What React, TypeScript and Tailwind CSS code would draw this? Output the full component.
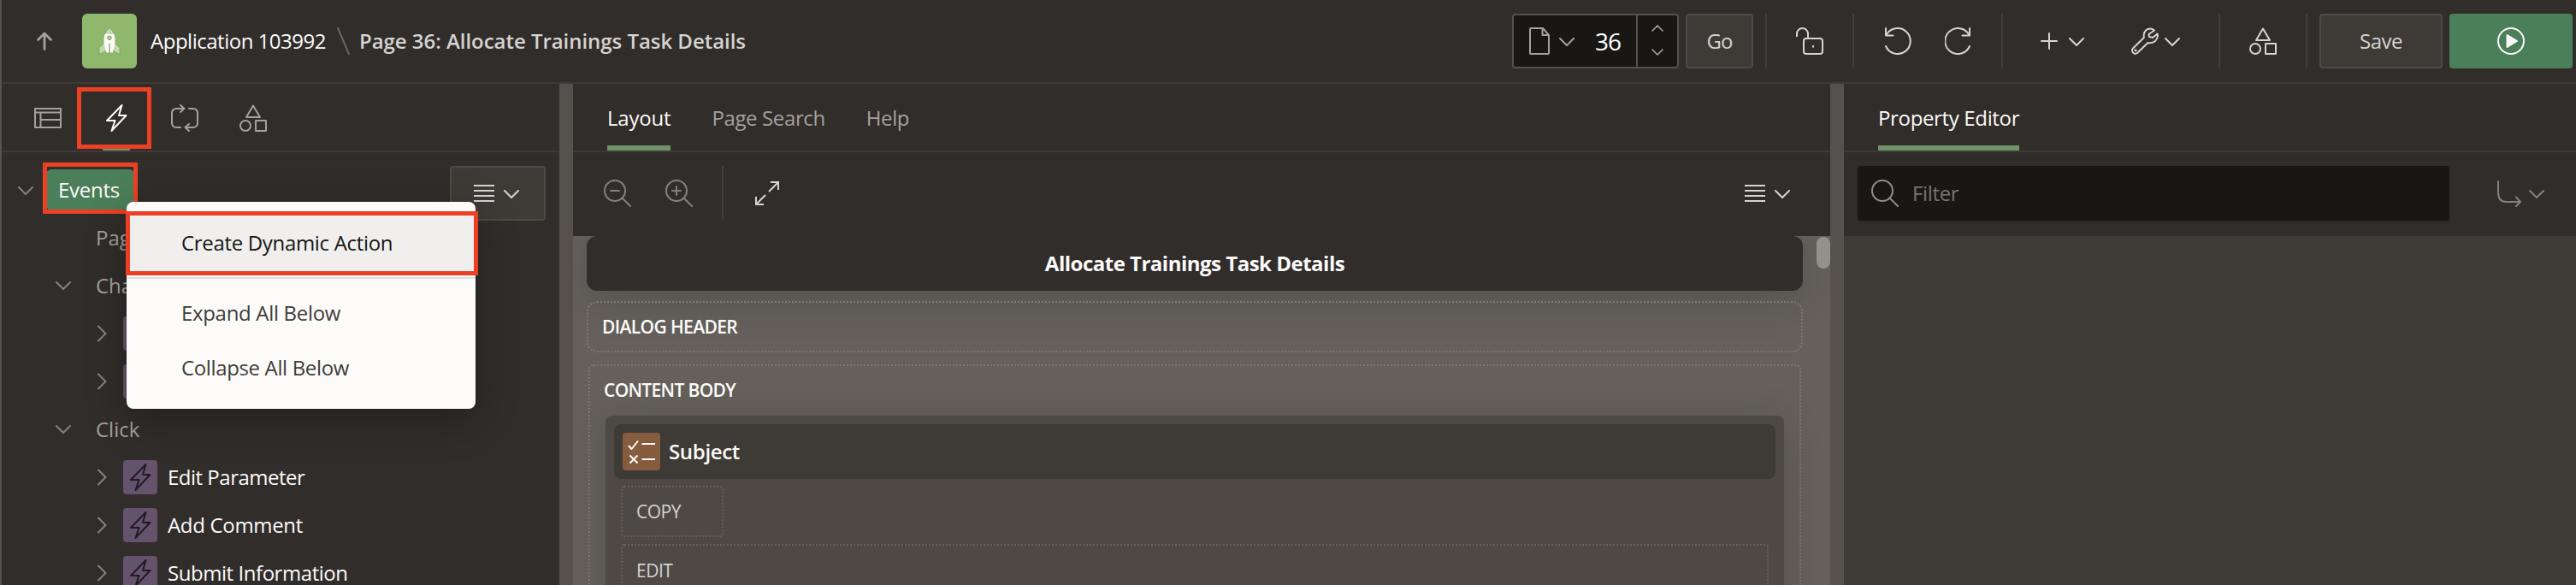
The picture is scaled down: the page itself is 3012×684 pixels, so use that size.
import type { ReactNode } from "react";

type IconProps = { className?: string };

function Icon({ className = "", children, size = "size-8", box = "0 0 32 32" }: { className?: string; children: ReactNode; size?: string; box?: string }) {
  return (
    <svg viewBox={box} className={`shrink-0 ${size} ${className}`} fill="none" stroke="currentColor" strokeWidth="2" strokeLinecap="round" strokeLinejoin="round">
      {children}
    </svg>
  );
}

const ChevronDown = ({ className }: IconProps) => (
  <Icon className={className} size="w-[18px] h-[10px]" box="0 0 18 10">
    <path d="M1 1l8 8 8-8" />
  </Icon>
);

const ChevronRight = ({ className }: IconProps) => (
  <Icon className={className} size="w-[11px] h-[20px]" box="0 0 11 20">
    <path d="M1 1.5l8.5 8.5L1 18.5" />
  </Icon>
);

const Menu = ({ className }: IconProps) => (
  <Icon className={className} size="w-6 h-5" box="0 0 24 20">
    <path d="M0 1h24M0 7h24M0 13h24M0 19h24" strokeLinecap="butt" />
  </Icon>
);

const Shapes = ({ className }: IconProps) => (
  <Icon className={className}>
    <path d="M16 1.5L24 15H8z" />
    <circle cx="7" cy="25" r="6" />
    <path d="M19 19h12v12H19z" />
  </Icon>
);

const Bolt = ({ className }: IconProps) => (
  <Icon className={className}>
    <path d="M22.500 1L5 19h9.500L10.500 31 27.500 13h-8.500z" />
  </Icon>
);

const Refresh = ({ className }: IconProps) => (
  <Icon className={className}>
    <path d="M11 27H6.500Q1 27 1 21.500v-11Q1 5 6.500 5H15M11 1l4.500 4L11 9M21 5h4.500Q31 5 31 10.500v11Q31 27 25.500 27H17M21 23l-4.500 4 4.500 4" />
  </Icon>
);

const PageIcon = ({ className }: IconProps) => (
  <Icon className={className}>
    <path d="M1 5h30v22H1zM1 9.500h30M7.500 9.500V27M7.500 18H31" />
  </Icon>
);

const Undo = ({ className }: IconProps) => (
  <Icon className={className}>
    <path d="M1 1v8.500h8.500M1.500 9A15 15 0 1 1 1 22" />
  </Icon>
);

const Redo = ({ className }: IconProps) => (
  <Icon className={className}>
    <path d="M29 1v8.500h-8.500M28.500 9A15 15 0 1 0 29 22" />
  </Icon>
);

const Magnifier = ({ className, children }: { className?: string; children?: ReactNode }) => (
  <Icon className={className}>
    <circle cx="13" cy="13" r="12" />
    <path d="M21.500 21.500L31 31" />
    {children}
  </Icon>
);

const Rocket = () => (
  <svg viewBox="0 0 32 32" className="size-8">
    <path d="M10.500 18L4 23.500V31.500l8-4zM21.500 18l6.500 5.500V31.500l-8-4z" fill="#c3d8ad" stroke="#78a05a" strokeWidth="0.800" />
    <path d="M16 0.500q-4 3-5.500 7.500h11Q20 3.500 16 0.500z" fill="#c3d8ad" stroke="#78a05a" strokeWidth="0.800" />
    <path d="M10.700 7.500h10.600Q24.500 18 19.500 29.500h-7Q7.500 18 10.700 7.500z" fill="#fcfbfa" />
    <circle cx="16" cy="12.300" r="2.200" fill="#b9d3a0" stroke="#6f9853" strokeWidth="1" />
    <path d="M16 19v12" stroke="#78a05a" strokeWidth="1.200" />
  </svg>
);

const Divider = () => <div className="h-16 w-[2px] shrink-0 bg-[#423e39]" />;

function Header() {
  return (
    <header className="flex h-[98px] shrink-0 items-center border-b-2 border-[#3e3a35] pr-1">
      <Icon className="ml-[34px] text-[#a5a19d]">
        <path d="M16 25.500V7.500M8.500 14.500L16 7l7.500 7.500" strokeWidth="2.800" />
      </Icon>
      <div className="ml-7 flex size-16 items-center justify-center rounded-md bg-[#8fb86c]">
        <Rocket />
      </div>
      <span className="ml-4 text-2xl tracking-[-0.490px] text-[#fcfbfa]">Application 103992</span>
      <Icon className="ml-[12px] text-[#6b6661]" size="w-[18px] h-8" box="0 0 18 32">
        <path d="M2 1l13 30" />
      </Icon>
      <span className="ml-[9px] text-2xl font-semibold tracking-[-0.040px] text-[#d6d3d1]">Page 36: Allocate Trainings Task Details</span>

      <div className="ml-auto flex h-16 w-[195px] items-stretch rounded border-2 border-[#58514a] bg-[#191714]">
        <div className="flex w-[143px] items-center pl-[18px]">
          <Icon className="text-[#a5a19d]" size="w-6 h-8" box="0 0 24 32">
            <path d="M2 1h14l7 8v21q0 1-1 1H2q-1 0-1-1V2q0-1 1-1zM15.500 1v8H23" />
          </Icon>
          <ChevronDown className="ml-[11px] mt-[2px] text-[#a5a19d]" />
          <span className="ml-[24px] text-[28px] font-medium tracking-[-1px] text-white">36</span>
        </div>
        <div className="flex flex-1 flex-col items-center justify-between border-l-2 border-[#58514a] pb-[13px] pt-[11px] text-[#a5a19d]">
          <Icon size="w-[14px] h-2" box="0 0 14 8">
            <path d="M1 7l6-6 6 6" strokeWidth="1.600" />
          </Icon>
          <Icon size="w-[14px] h-2" box="0 0 14 8">
            <path d="M1 1l6 6 6-6" strokeWidth="1.600" />
          </Icon>
        </div>
      </div>
      <button className="ml-2 h-16 w-[79px] rounded border-2 border-[#4e4a45] bg-[#3e3a35] text-2xl font-medium tracking-[-1px] text-[#d6d3d1]">Go</button>
      <div className="ml-[14px] flex items-center text-[#d6d3d1]">
        <Divider />
        <div className="flex w-[100px] justify-center">
          <Icon>
            <rect x="9" y="13" width="22" height="18" rx="3" />
            <path d="M1 11V7.500a6.500 6.500 0 0 1 13 0V13M20 21v2.500" strokeLinecap="butt" />
          </Icon>
        </div>
        <Divider />
        <div className="flex w-[172px] gap-[38px] pl-9">
          <Undo />
          <Redo />
        </div>
        <Divider />
        <div className="flex w-[252px] items-center pl-11">
          <Icon size="size-5" box="0 0 20 20">
            <path d="M10 1v18M1 10h18" />
          </Icon>
          <ChevronDown className="ml-[13px] mt-[2px]" />
          <Icon className="ml-[55px]">
            <path d="M27 3.500Q22 -0.500 17 3.500q-3 3-2.200 8.500L2 24.500q-2 2.500 0 5t5 0.500L19.500 18q5 1 8.500-2 4-4 2.500-8.500L25 12l-4-1-0.500-3z" />
            <circle cx="5" cy="26.800" r="0.600" />
          </Icon>
          <ChevronDown className="ml-[7px] mt-[2px]" />
        </div>
        <Divider />
        <div className="flex w-[100px] justify-center">
          <Shapes />
        </div>
        <Divider />
      </div>
      <button className="ml-[14px] h-16 w-36 rounded border-2 border-[#4e4a45] bg-[#3e3a35] text-2xl font-medium tracking-[-0.500px] text-[#d6d3d1]">Save</button>
      <button className="ml-2 flex h-16 w-36 items-center justify-center rounded bg-[#4b7f5a] text-[#fcfbfa]">
        <Icon>
          <circle cx="16" cy="16" r="15" />
          <path d="M11.500 9v14L23 16z" fill="currentColor" />
        </Icon>
      </button>
    </header>
  );
}

const tabBar = "flex h-20 shrink-0 border-b-2 border-[#3e3a35]";

function Tab({ label, active = false, spacing }: { label: string; active?: boolean; spacing: string }) {
  return (
    <div className={`relative flex items-center whitespace-nowrap pt-[2px] text-2xl ${spacing} ${active ? "font-medium text-[#fcfbfa]" : "text-[#a5a19d]"}`}>
      {label}
      {active && <span className="absolute inset-x-0 bottom-0 h-[6px] bg-[#729269]" />}
    </div>
  );
}

function ActionRow({ label, spacing = "" }: { label?: string; spacing?: string }) {
  return (
    <div className="flex h-14 items-center pl-28">
      <ChevronRight className="text-[#85817c]" />
      <div className="ml-[19px] flex size-10 shrink-0 items-center justify-center rounded bg-[#65536e] text-[#201c22]">
        <Bolt />
      </div>
      {label && <span className={`ml-3 whitespace-nowrap text-2xl text-[#fcfbfa] ${spacing}`}>{label}</span>}
    </div>
  );
}

function GroupRow({ label }: { label: string }) {
  return (
    <div className="flex h-14 items-center pl-[63px] text-2xl text-[#a5a19d]">
      <ChevronDown className="text-[#85817c]" />
      <span className="ml-[29px]">{label}</span>
    </div>
  );
}

function ContextMenu() {
  return (
    <div className="absolute left-[94px] top-[38px] h-[242px] w-[408px] rounded-lg bg-[#fcfbfa] pt-4 text-2xl text-[#403c38] shadow-[0_12px_48px_rgba(0,0,0,0.3)]">
      <div className="relative flex h-16 items-center bg-[#f1efed] pl-16 tracking-[-0.320px] text-[#161513]">
        Create Dynamic Action
        <span className="absolute -left-px -right-[3px] -top-[5px] h-[75px] border-[5px] border-[#ec4025]" />
      </div>
      <div className="mb-2 mt-2 h-[2px] bg-[#e3e1df]" />
      <div className="flex h-16 items-center pl-16 tracking-[-0.320px]">Expand All Below</div>
      <div className="flex h-16 items-center pl-16 tracking-[-0.360px]">Collapse All Below</div>
    </div>
  );
}

function TreePanel() {
  return (
    <aside className="flex w-[652px] shrink-0 flex-col">
      <div className={`${tabBar} pl-[14px] text-[#a5a19d]`}>
        <div className="flex w-20 items-center justify-center pt-[2px]"><PageIcon /></div>
        <div className="relative flex w-20 items-center justify-center pt-[2px] text-[#fcfbfa]">
          <Bolt />
          <span className="absolute inset-x-6 bottom-0 h-[6px] bg-[#729269]" />
          <span className="absolute -left-[6px] top-1 h-[72px] w-[87px] border-[5px] border-[#ec4025]" />
        </div>
        <div className="flex w-20 items-center justify-center pt-[2px]"><Refresh /></div>
        <div className="flex w-20 items-center justify-center pt-[2px]"><Shapes /></div>
      </div>
      <div className="flex min-h-0 flex-1 pr-4 pt-4">
        <div className="min-w-0 flex-1">
          <div className="flex h-14 items-center pl-[19px]">
            <ChevronDown className="mt-[2px] text-[#85817c]" />
            <div className="relative z-10 ml-[15px] flex h-12 w-[103px] items-center rounded-md bg-[#4b7f5a] pl-[14px] text-2xl tracking-[-0.250px] text-[#fcfbfa]">
              Events
              <span className="absolute -left-[4px] -top-2 h-[60px] w-[111px] border-[5px] border-[#ec4025]" />
              <ContextMenu />
            </div>
          </div>
          <div className="flex h-14 items-center pl-[110px] text-2xl text-[#a5a19d]">Page Load</div>
          <GroupRow label="Change" />
          <ActionRow />
          <ActionRow />
          <GroupRow label="Click" />
          <ActionRow label="Edit Parameter" spacing="tracking-[-0.500px]" />
          <ActionRow label="Add Comment" spacing="tracking-[-0.320px]" />
          <ActionRow label="Submit Information" spacing="tracking-[-0.450px]" />
        </div>
        <button className="flex h-16 w-28 shrink-0 items-center justify-center gap-[11px] rounded border-2 border-[#4e4a45] bg-[#3e3a35] pr-1 text-[#d6d3d1]">
          <Menu />
          <ChevronDown className="mt-[2px]" />
        </button>
      </div>
    </aside>
  );
}

function LayoutPanel() {
  return (
    <main className="flex w-[1470px] shrink-0 flex-col">
      <div className={`${tabBar} gap-12 pl-10`}>
        <Tab label="Layout" active spacing="tracking-[-0.200px]" />
        <Tab label="Page Search" spacing="tracking-[-0.370px]" />
        <Tab label="Help" spacing="tracking-[-0.450px]" />
      </div>
      <div className="flex h-[98px] shrink-0 items-center pb-[2px] pl-9 text-[#85817c]">
        <Magnifier><path d="M8 13h10" /></Magnifier>
        <Magnifier className="ml-10"><path d="M8 13h10M13 8v10" /></Magnifier>
        <div className="ml-[34px] h-16 w-[2px] bg-[#423e39]" />
        <Icon className="ml-[35px] text-[#d6d3d1]">
          <path d="M20 3h9v9M28.500 3.500L18 14M12 29H3v-9M3.500 28.500L14 18" strokeLinejoin="miter" strokeLinecap="butt" />
        </Icon>
        <div className="ml-auto mr-[47px] flex items-center gap-[11px] text-[#d6d3d1]">
          <Menu />
          <ChevronDown className="mt-[2px]" />
        </div>
      </div>
      <div className="relative min-h-0 flex-1 overflow-hidden bg-[#65605b] pl-4 pr-8">
        <div className="flex h-16 items-center justify-center rounded-xl bg-[#312d2a] text-2xl font-bold tracking-[-0.500px] text-[#fcfbfa] shadow-[0_12px_48px_rgba(0,0,0,0.16)]">
          Allocate Trainings Task Details
        </div>
        <div className="mt-3 flex h-[60px] items-center rounded-xl border-2 border-dotted border-[#7d7873] pl-4 pt-[2px] text-[21px] font-semibold tracking-[-0.630px] text-[#fcfbfa]">
          DIALOG HEADER
        </div>
        <div className="mx-[2px] mt-[14px] h-[400px] rounded-md border-2 border-dotted border-[#7d7873] px-[18px]">
          <div className="-ml-[2px] flex h-[58px] items-center text-[21px] font-semibold tracking-[-0.650px] text-[#fcfbfa]">CONTENT BODY</div>
          <div className="h-[400px] rounded-lg bg-[#4e4945] px-[10px] pt-[10px] shadow-[0_8px_48px_rgba(0,0,0,0.16)]">
            <div className="flex h-16 items-center rounded-lg bg-[#3e3a35] pl-[10px]">
              <div className="flex size-11 items-center justify-center rounded bg-[#855c3e] text-[#fcfbfa]">
                <Icon>
                  <path d="M1 9l3.500 4L12 3.500M16.500 7H32M16.500 25H32M2.500 20.500l9 9M11.500 20.500l-9 9" strokeLinecap="butt" />
                </Icon>
              </div>
              <span className="ml-[10px] text-2xl font-semibold tracking-[-0.330px] text-[#fcfbfa]">Subject</span>
            </div>
            <div className="ml-2 mt-2 flex h-[60px] w-[120px] items-center rounded border-2 border-dotted border-[#66615c] pl-4 pt-[2px] text-[21px] tracking-[-0.500px] text-[#d6d3d1]">COPY</div>
            <div className="mx-2 mt-2 flex h-[200px] rounded border-2 border-dotted border-[#66615c] pl-4 pt-[15px] text-[21px] leading-7 tracking-[-0.500px] text-[#d6d3d1]">EDIT</div>
          </div>
        </div>
        <div className="absolute right-0 top-[1px] h-[37px] w-4 rounded-full bg-[#94908c]" />
      </div>
    </main>
  );
}

function PropertyPanel() {
  return (
    <section className="flex min-w-0 flex-1 flex-col">
      <div className={`${tabBar} pl-10`}>
        <Tab label="Property Editor" active spacing="tracking-[-0.350px]" />
      </div>
      <div className="flex h-[98px] shrink-0 items-center pb-[2px] pl-4 text-[#85817c]">
        <div className="flex h-16 w-[692px] items-center rounded bg-[#191714] pl-4 shadow-[0_1px_2px_rgba(0,0,0,0.2)]">
          <Magnifier className="text-[#918d88]" />
          <span className="ml-4 text-2xl tracking-[-0.350px] text-[#787572]">Filter</span>
        </div>
        <Icon className="ml-[54px]">
          <path d="M3 2v12.500Q3 26 12 26H29M24 20.500l5 5.500-5 5" />
        </Icon>
        <ChevronDown className="ml-[7px] mt-[2px]" />
      </div>
      <div className="flex-1 bg-[#3e3a35]" />
    </section>
  );
}

const Splitter = () => <div className="w-4 shrink-0 bg-[#56514c]" />;

export default function App() {
  return (
    <div className="flex h-[684px] w-[3012px] flex-col overflow-hidden border-l-2 border-[#57534e] bg-[#312d2a] font-['Open_Sans','Noto_Sans',sans-serif]">
      <Header />
      <div className="flex min-h-0 flex-1">
        <TreePanel />
        <Splitter />
        <LayoutPanel />
        <Splitter />
        <PropertyPanel />
      </div>
    </div>
  );
}
